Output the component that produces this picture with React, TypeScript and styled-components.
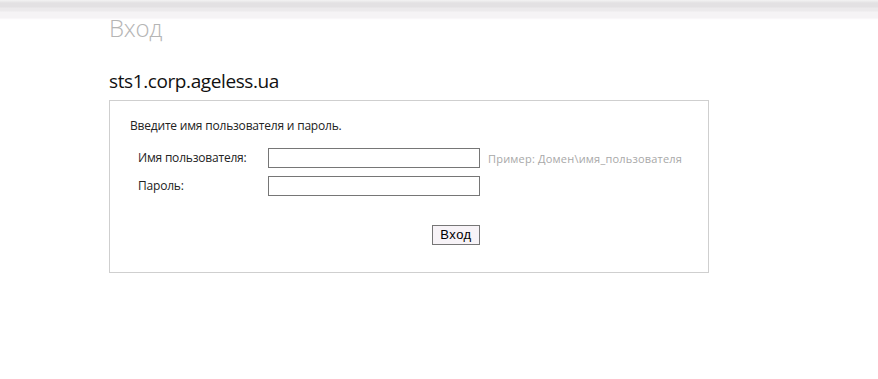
import React from 'react';
import styled, { createGlobalStyle } from 'styled-components';

const GlobalStyle = createGlobalStyle`
  html, body {
    margin: 0;
    padding: 0;
    background: #fff;
  }
  body {
    font-family: "Open Sans", "Noto Sans", sans-serif;
    color: #000;
  }
`;

const TopBand = styled.div`
  height: 20px;
  background: linear-gradient(
    to bottom,
    #f3f3f3 0px,
    #e3e1e3 3px,
    #e3e1e3 7px,
    #ecEAec 8px,
    #ecEAec 11px,
    #f5f3f5 12px,
    #f5f3f5 18px,
    #fdfbfd 19px,
    #ffffff 20px
  );
`;

const Content = styled.div`
  margin-left: 109px;
  width: 600px;
`;

const PageTitle = styled.h1`
  margin: -8px 0 0 0;
  font-family: "Open Sans", sans-serif;
  font-weight: 300;
  font-size: 24px;
  line-height: 32px;
  color: #b5b5b5;
  letter-spacing: -0.3px;
`;

const ServerName = styled.h2`
  margin: 24px 0 0 0;
  font-family: "Open Sans", sans-serif;
  font-weight: 400;
  font-size: 19px;
  line-height: 26px;
  color: #111;
  letter-spacing: -0.4px;
`;

const LoginPanel = styled.div`
  box-sizing: border-box;
  margin-top: 6px;
  border: 1px solid #cfcfcf;
  height: 173px;
  padding: 16px 20px 0 20px;
`;

const Intro = styled.div`
  font-size: 12px;
  line-height: 18px;
  color: #222;
  letter-spacing: -0.2px;
`;

const FormGrid = styled.div`
  margin-top: 13px;
  margin-left: 8px;
  display: grid;
  grid-template-columns: 122px 212px auto;
  column-gap: 8px;
  row-gap: 8px;
  align-items: center;
`;

const Label = styled.label`
  font-size: 12px;
  line-height: 20px;
  color: #222;
  letter-spacing: -0.2px;
`;

const TextInput = styled.input`
  box-sizing: border-box;
  width: 212px;
  height: 20px;
  margin: 0;
  padding: 1px 3px;
  border: 1px solid #767676;
  background: #fff;
  font-size: 12px;
  outline: none;
`;

const Hint = styled.span`
  font-size: 11px;
  color: #a8a8a8;
  letter-spacing: 0.2px;
`;

const ButtonRow = styled.div`
  margin-top: 26px;
  padding-left: 302px;
`;

const SubmitButton = styled.button`
  box-sizing: border-box;
  width: 48px;
  height: 20px;
  padding: 0;
  border: 1px solid #767676;
  background: #f7f3f7;
  font-family: "Liberation Sans", sans-serif;
  font-size: 13px;
  color: #000;
  letter-spacing: 0.5px;
  cursor: pointer;
`;

export default function App() {
  return (
    <>
      <GlobalStyle />
      <TopBand />
      <Content>
        <PageTitle>Вход</PageTitle>
        <ServerName>sts1.corp.ageless.ua</ServerName>
        <LoginPanel>
          <Intro>Введите имя пользователя и пароль.</Intro>
          <FormGrid>
            <Label htmlFor="user">Имя пользователя:</Label>
            <TextInput id="user" type="text" />
            <Hint>Пример: Домен\имя_пользователя</Hint>
            <Label htmlFor="pass">Пароль:</Label>
            <TextInput id="pass" type="password" />
            <span />
          </FormGrid>
          <ButtonRow>
            <SubmitButton type="submit">Вход</SubmitButton>
          </ButtonRow>
        </LoginPanel>
      </Content>
    </>
  );
}
